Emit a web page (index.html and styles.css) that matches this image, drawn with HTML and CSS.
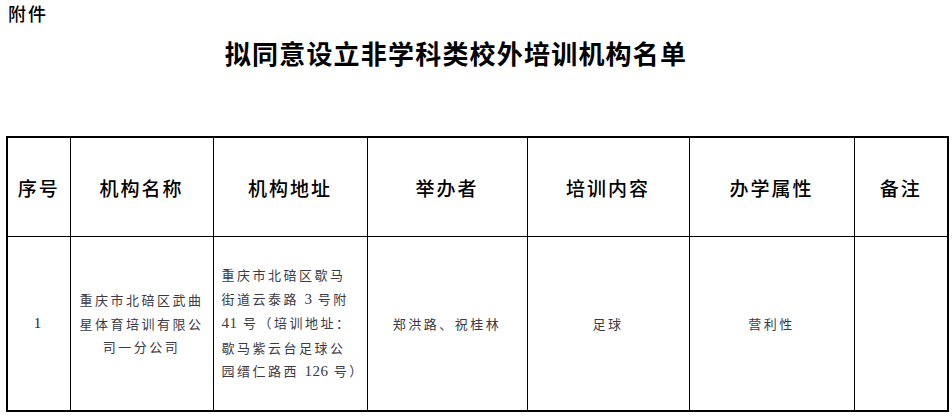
FILE: index.html
```html
<!DOCTYPE html>
<html lang="zh-CN">
<head>
<meta charset="utf-8">
<title>拟同意设立非学科类校外培训机构名单</title>
<link rel="stylesheet" href="styles.css">
</head>
<body>
<div class="page">
  <div class="attach">附件</div>
  <h1 class="title">拟同意设立非学科类校外培训机构名单</h1>
  <table class="list">
    <colgroup>
      <col class="c1"><col class="c2"><col class="c3"><col class="c4"><col class="c5"><col class="c6"><col class="c7">
    </colgroup>
    <thead>
      <tr>
        <th>序号</th>
        <th>机构名称</th>
        <th>机构地址</th>
        <th>举办者</th>
        <th>培训内容</th>
        <th>办学属性</th>
        <th>备注</th>
      </tr>
    </thead>
    <tbody>
      <tr>
        <td class="num">1</td>
        <td>重庆市北碚区武曲<br>星体育培训有限公<br>司一分公司</td>
        <td class="addr">重庆市北碚区歇马<br>街道云泰路 <span class="lat">3</span> 号附<br><span class="lat">41</span> 号（培训地址：<br>歇马紫云台足球公<br>园缙仁路西 <span class="lat">126</span> 号）</td>
        <td>郑洪路、祝桂林</td>
        <td>足球</td>
        <td>营利性</td>
        <td></td>
      </tr>
    </tbody>
  </table>
</div>
</body>
</html>
```

FILE: styles.css
```css
html, body {
  margin: 0;
  padding: 0;
  background: #ffffff;
}

.page {
  width: 952px;
  height: 417px;
  overflow: hidden;
  font-family: "Noto Sans CJK SC", "Noto Sans", sans-serif;
  color: #000;
}

.attach {
  padding-left: 8px;
  font-size: 18px;
  line-height: 26px;
  font-weight: 500;
  letter-spacing: 2px;
}

.title {
  margin: 9px 0 0 0;
  padding-right: 40px;
  text-align: center;
  font-size: 26px;
  line-height: 36px;
  font-weight: 700;
  letter-spacing: 1.2px;
}

.list {
  margin: 65px 0 0 6px;
  border-collapse: collapse;
  table-layout: fixed;
  width: 941px;
  border: 2px solid #000;
}

.c1 { width: 63px; }
.c2 { width: 143px; }
.c3 { width: 154px; }
.c4 { width: 160px; }
.c5 { width: 162px; }
.c6 { width: 165px; }
.c7 { width: 94px; }

.list th,
.list td {
  border: 1px solid #000;
  text-align: center;
  vertical-align: middle;
  padding: 0;
  white-space: nowrap;
}

.list th {
  height: 98px;
  font-size: 19px;
  font-weight: 500;
  letter-spacing: 2px;
}

.list td {
  height: 173px;
  font-size: 13px;
  line-height: 23.5px;
  letter-spacing: 2.5px;
  color: #3a3a48;
}

.list td.addr {
  text-align: left;
  padding-left: 8px;
}

.list td.num {
  font-family: "Liberation Serif", serif;
  font-size: 15px;
  color: #1a1a55;
}

.lat {
  font-family: "Liberation Serif", serif;
  font-size: 15px;
  letter-spacing: 0.5px;
}
```
